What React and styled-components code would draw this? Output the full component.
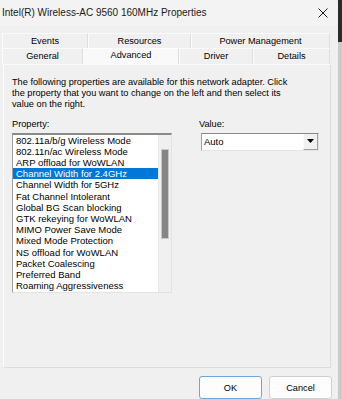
import React from "react";
import styled, { createGlobalStyle } from "styled-components";

const GlobalStyle = createGlobalStyle`
  html, body {
    margin: 0;
    padding: 0;
    background: #f0f0f0;
  }
  body {
    font-family: "Liberation Sans", Arial, sans-serif;
  }
`;

const topTabs = ["Events", "Resources", "Power Management"];
const topWidths = [86, 103, 139];
const bottomTabs = ["General", "Advanced", "Driver", "Details"];
const bottomWidths = [81, 96, 74, 77];

const properties = [
  "802.11a/b/g Wireless Mode",
  "802.11n/ac Wireless Mode",
  "ARP offload for WoWLAN",
  "Channel Width for 2.4GHz",
  "Channel Width for 5GHz",
  "Fat Channel Intolerant",
  "Global BG Scan blocking",
  "GTK rekeying for WoWLAN",
  "MIMO Power Save Mode",
  "Mixed Mode Protection",
  "NS offload for WoWLAN",
  "Packet Coalescing",
  "Preferred Band",
  "Roaming Aggressiveness",
];

const App = () => {
  return (
    <>
      <GlobalStyle />
      <Screen>
        <Dialog>
          <TitleBar>
            <Title>Intel(R) Wireless-AC 9560 160MHz Properties</Title>
            <CloseButton aria-label="Close">
              <svg width="10" height="10" viewBox="0 0 10 10">
                <path d="M0.5 0.5 L9.5 9.5 M9.5 0.5 L0.5 9.5" stroke="#1a1a1a" strokeWidth="1" fill="none" />
              </svg>
            </CloseButton>
          </TitleBar>

          <TabStrip>
            <TabRow>
              {topTabs.map((t, i) => (
                <Tab key={t} $w={topWidths[i]}>{t}</Tab>
              ))}
            </TabRow>
            <TabRow>
              {bottomTabs.map((t, i) => (
                <Tab key={t} $w={bottomWidths[i]} $active={t === "Advanced"}>
                  {t}
                </Tab>
              ))}
            </TabRow>
          </TabStrip>

          <Panel>
            <Description>
              The following properties are available for this network adapter. Click
              <br />
              the property that you want to change on the left and then select its
              <br />
              value on the right.
            </Description>

            <Fields>
              <PropertyColumn>
                <Label>Property:</Label>
                <ListBox>
                  <Items>
                    {properties.map((p) => (
                      <Item key={p} $selected={p === "Channel Width for 2.4GHz"}>
                        {p}
                      </Item>
                    ))}
                  </Items>
                  <ScrollTrack>
                    <ScrollThumb />
                  </ScrollTrack>
                </ListBox>
              </PropertyColumn>

              <ValueColumn>
                <Label>Value:</Label>
                <Select>
                  <SelectText>Auto</SelectText>
                  <SelectButton>
                    <svg width="7" height="4" viewBox="0 0 7 4">
                      <path d="M0 0 H7 L3.5 4 Z" fill="#000" />
                    </svg>
                  </SelectButton>
                </Select>
              </ValueColumn>
            </Fields>
          </Panel>

          <ButtonRow>
            <Button $default>OK</Button>
            <Button>Cancel</Button>
          </ButtonRow>
        </Dialog>

        <SideStrip>
          <StripTop />
          <StripBottom />
        </SideStrip>
      </Screen>
    </>
  );
};

export default App;

const Screen = styled.div`
  display: flex;
  width: 342px;
  height: 399px;
  overflow: hidden;
`;

const Dialog = styled.div`
  width: 338px;
  height: 100%;
  background: #f0f0f0;
  border-top-right-radius: 7px;
  display: flex;
  flex-direction: column;
`;

const TitleBar = styled.div`
  height: 26px;
  display: flex;
  align-items: center;
  justify-content: space-between;
  padding: 0 10px 0 2px;
  background: #f3f3f3;
  border-top-right-radius: 7px;
`;

const Title = styled.div`
  font-size: 10px;
  color: #1a1a1a;
`;

const CloseButton = styled.div`
  display: flex;
  align-items: center;
  justify-content: center;
  width: 10px;
  height: 10px;
`;

const TabStrip = styled.div`
  margin: 7px 0 0 2px;
  display: flex;
  flex-direction: column;
`;

const TabRow = styled.div`
  display: flex;
  height: 15.5px;
`;

const Tab = styled.div`
  width: ${(p) => p.$w}px;
  box-sizing: border-box;
  display: flex;
  align-items: center;
  justify-content: center;
  font-size: 9.2px;
  color: #000;
  background: ${(p) => (p.$active ? "#f9f9f9" : "#f0f0f0")};
  border-top: 1px solid ${(p) => (p.$active ? "#ffffff" : "#fbfbfb")};
  border-left: 1px solid #fbfbfb;
  border-right: 1px solid #dedede;
  padding-bottom: ${(p) => (p.$active ? "2px" : "0")};
`;

const Panel = styled.div`
  margin-left: 3px;
  width: 328px;
  height: 308px;
  box-sizing: border-box;
  border: 1px solid #fbfbfb;
  border-right-color: #dcdcdc;
  border-bottom-color: #dcdcdc;
  padding: 12px 0 0 8px;
  display: flex;
  flex-direction: column;
`;

const Description = styled.p`
  margin: 0;
  font-size: 9.2px;
  line-height: 11px;
  color: #000;
`;

const Fields = styled.div`
  margin-top: 9px;
  display: flex;
  gap: 27px;
`;

const PropertyColumn = styled.div`
  width: 160px;
  display: flex;
  flex-direction: column;
`;

const ValueColumn = styled.div`
  width: 120px;
  display: flex;
  flex-direction: column;
`;

const Label = styled.div`
  font-size: 9.2px;
  line-height: 11px;
  height: 14px;
  color: #000;
`;

const ListBox = styled.div`
  height: 160px;
  box-sizing: border-box;
  display: flex;
  background: #fff;
  border-top: 2px solid #8a8a8a;
  border-left: 1px solid #a0a0a0;
  border-right: 1px solid #e3e3e3;
  border-bottom: 1px solid #e3e3e3;
`;

const Items = styled.div`
  flex: 1;
  display: flex;
  flex-direction: column;
`;

const Item = styled.div`
  height: 11.2px;
  line-height: 11.2px;
  padding-left: 3px;
  font-size: 9.5px;
  white-space: nowrap;
  color: ${(p) => (p.$selected ? "#fff" : "#000")};
  background: ${(p) => (p.$selected ? "#0078d7" : "transparent")};
`;

const ScrollTrack = styled.div`
  width: 13px;
  background: #f0f0f0;
  border-left: 1px solid #e8e8e8;
  padding: 14px 2px 0 2px;
  box-sizing: border-box;
`;

const ScrollThumb = styled.div`
  height: 90px;
  background: #858585;
  border: 1px solid #c8c8c8;
  box-sizing: border-box;
`;

const Select = styled.div`
  margin-left: 2px;
  width: 118px;
  height: 18px;
  box-sizing: border-box;
  display: flex;
  align-items: stretch;
  background: #fff;
  border-top: 1px solid #8a8a8a;
  border-left: 1px solid #a0a0a0;
  border-right: 1px solid #e3e3e3;
  border-bottom: 1px solid #e3e3e3;
`;

const SelectText = styled.div`
  flex: 1;
  display: flex;
  align-items: center;
  padding-left: 2px;
  font-size: 9.5px;
  color: #000;
`;

const SelectButton = styled.div`
  width: 13px;
  display: flex;
  align-items: center;
  justify-content: center;
  background: #f0f0f0;
  border-left: 1px solid #fbfbfb;
  border-right: 1px solid #a0a0a0;
  border-bottom: 1px solid #a0a0a0;
`;

const ButtonRow = styled.div`
  margin-top: 8px;
  padding-left: 199px;
  display: flex;
  gap: 7px;
`;

const Button = styled.div`
  width: 63px;
  height: 23px;
  box-sizing: border-box;
  display: flex;
  align-items: center;
  justify-content: center;
  font-size: 9.2px;
  color: #000;
  background: #fdfdfd;
  border: 1px solid ${(p) => (p.$default ? "#6aa6e0" : "#d0d0d0")};
  border-radius: 3px;
`;

const SideStrip = styled.div`
  width: 4px;
  display: flex;
  flex-direction: column;
`;

const StripTop = styled.div`
  height: 42px;
  background: #2b2b2b;
`;

const StripBottom = styled.div`
  flex: 1;
  background: #cbcbcb;
`;
